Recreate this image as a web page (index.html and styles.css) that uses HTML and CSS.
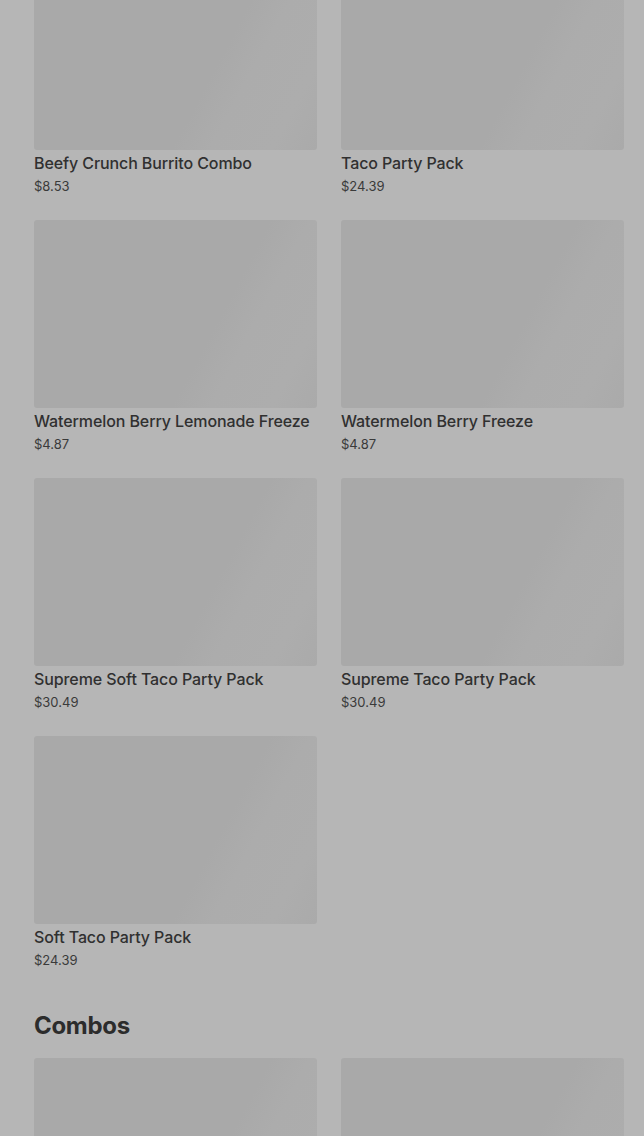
FILE: index.html
```html
<!DOCTYPE html>
<html lang="en">
<head>
  <meta charset="UTF-8" />
  <meta name="viewport" content="width=device-width, initial-scale=1.0"/>
  <title>Menu</title>
  <link rel="stylesheet" href="styles.css">
</head>
<body>
  <main class="menu">
    <section class="category">
      <div class="grid">
        <div class="item">
          <div class="thumb"></div>
          <h3>Beefy Crunch Burrito Combo</h3>
          <p class="price">$8.53</p>
        </div>
        <div class="item">
          <div class="thumb"></div>
          <h3>Taco Party Pack</h3>
          <p class="price">$24.39</p>
        </div>
        <div class="item">
          <div class="thumb"></div>
          <h3>Watermelon Berry Lemonade Freeze</h3>
          <p class="price">$4.87</p>
        </div>
        <div class="item">
          <div class="thumb"></div>
          <h3>Watermelon Berry Freeze</h3>
          <p class="price">$4.87</p>
        </div>
        <div class="item">
          <div class="thumb"></div>
          <h3>Supreme Soft Taco Party Pack</h3>
          <p class="price">$30.49</p>
        </div>
        <div class="item">
          <div class="thumb"></div>
          <h3>Supreme Taco Party Pack</h3>
          <p class="price">$30.49</p>
        </div>
        <div class="item">
          <div class="thumb"></div>
          <h3>Soft Taco Party Pack</h3>
          <p class="price">$24.39</p>
        </div>
      </div>
    </section>

    <section class="category">
      <h2>Combos</h2>
      <div class="grid">
        <div class="item">
          <div class="thumb"></div>
        </div>
        <div class="item">
          <div class="thumb"></div>
        </div>
      </div>
    </section>
  </main>
</body>
</html>
```

FILE: styles.css
```css
body {
  margin: 0;
  background: #b6b6b6;
  font-family: Inter, 'Noto Sans', sans-serif;
  color: #2f2f2f;
  overflow: hidden;
}

.menu {
  margin-top: -38px;
  padding: 0 20px 0 34px;
}

.category {
  margin-bottom: 42px;
}

.category h2 {
  margin: 0 0 17px 0;
  font-size: 24px;
  font-weight: 700;
  line-height: 30px;
  letter-spacing: -0.3px;
  color: #2c2c2c;
}

.grid {
  display: grid;
  grid-template-columns: 1fr 1fr;
  column-gap: 24px;
  row-gap: 25px;
}

.thumb {
  height: 188px;
  border-radius: 3px;
  background: linear-gradient(118deg, #a9a9a9 0%, #a9a9a9 62%, #acacac 72%, #adadad 88%, #aaaaaa 100%);
}

.item h3 {
  margin: 3px 0 0 0;
  font-size: 16px;
  font-weight: 500;
  line-height: 20px;
  letter-spacing: -0.1px;
  color: #303030;
  white-space: nowrap;
}

.item .price {
  margin: 4px 0 0 0;
  font-size: 13px;
  line-height: 18px;
  color: #3a3a3a;
}
```
